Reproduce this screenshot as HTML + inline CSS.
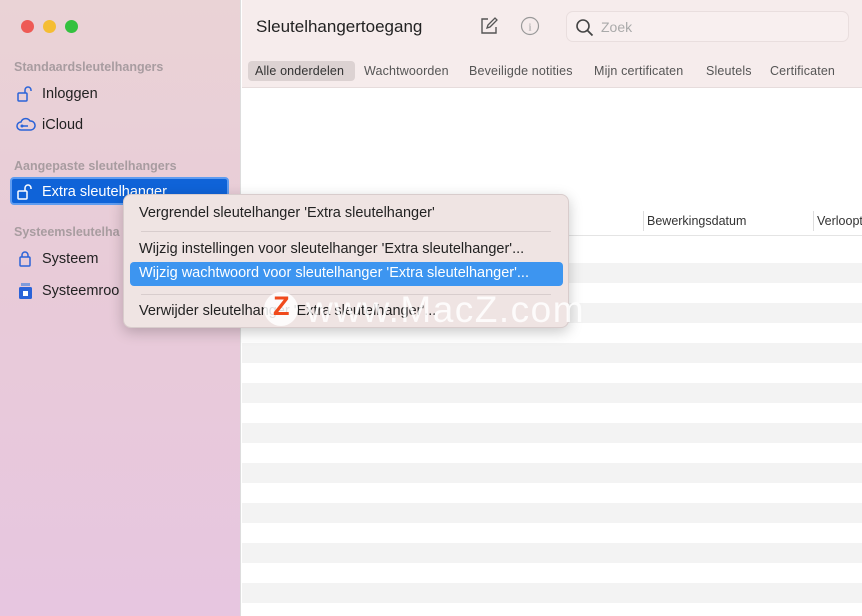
<!DOCTYPE html>
<html><head><meta charset="utf-8"><style>
*{margin:0;padding:0;box-sizing:border-box}
body{width:862px;height:616px;overflow:hidden;position:relative;font-family:"Liberation Sans",sans-serif;background:#fff}
.sb{position:absolute;left:0;top:0;width:241px;height:616px;background:linear-gradient(180deg,#ead3d6 0%,#e8cbd8 45%,#e7c6e0 100%);border-right:1px solid #ddd}
.dot{position:absolute;top:20px;width:13px;height:13px;border-radius:50%}
.sec{position:absolute;left:14px;font-size:12.5px;font-weight:bold;color:#a89ca0}
.it{position:absolute;left:42px;font-size:14.5px;color:#222}
.ic{position:absolute;left:16px}
.hdr{position:absolute;left:242px;top:0;width:620px;height:88px;background:#f6ecec;border-bottom:1px solid #e6dcdc}
.title{position:absolute;left:256px;top:17px;font-size:17px;color:#222}
.search{position:absolute;left:566px;top:11px;width:283px;height:31px;border:1px solid #e9dede;border-radius:7px;background:#f8efef}
.tab{position:absolute;top:64px;font-size:12.5px;color:#555;letter-spacing:.15px}
.stripe{position:absolute;left:242px;width:620px;height:20px;background:#f3f3f3}
.menu{position:absolute;left:123px;top:194px;width:446px;height:134px;background:#efe4e3;border-radius:8px;box-shadow:0 4px 14px rgba(0,0,0,.22);border:1px solid #d8cccc}
.mi{position:absolute;left:15px;font-size:14.5px;color:#222}
.sep{position:absolute;left:17px;right:17px;height:1px;background:#d8cdcd}
</style></head><body>
<div class="sb">
 <div class="dot" style="left:21px;background:#ee5a55"></div>
 <div class="dot" style="left:43px;background:#f5bd33"></div>
 <div class="dot" style="left:65px;background:#34c13f"></div>
 <div class="sec" style="top:60px">Standaardsleutelhangers</div>
 <svg class="ic" style="top:85px" width="20" height="18" viewBox="0 0 20 18"><rect x="2" y="8" width="9" height="8" rx="1" fill="none" stroke="#2a63d8" stroke-width="1.5"/><path d="M9 8V5a3 3 0 0 1 6 0v1" fill="none" stroke="#2a63d8" stroke-width="1.5"/></svg>
 <div class="it" style="top:86px">Inloggen</div>
 <svg class="ic" style="top:117px" width="20" height="16" viewBox="0 0 20 16"><path d="M5 13a4 4 0 0 1 0-8 5 5 0 0 1 9-1 4.5 4.5 0 0 1 1 9z" fill="none" stroke="#2a63d8" stroke-width="1.5"/><path d="M6 9h6" stroke="#2a63d8" stroke-width="1.5"/><circle cx="6" cy="9" r="1.5" fill="#2a63d8"/></svg>
 <div class="it" style="top:117px">iCloud</div>
 <div class="sec" style="top:159px">Aangepaste sleutelhangers</div>
 <div style="position:absolute;left:10px;top:177px;width:219px;height:28px;background:#0f63d8;border-radius:4px;border:2px solid #5f9cf0"></div>
 <svg class="ic" style="top:183px" width="20" height="18" viewBox="0 0 20 18"><rect x="2" y="8" width="9" height="8" rx="1" fill="none" stroke="#fff" stroke-width="1.5"/><path d="M9 8V5a3 3 0 0 1 6 0v1" fill="none" stroke="#fff" stroke-width="1.5"/></svg>
 <div class="it" style="top:184px;color:#fff">Extra sleutelhanger</div>
 <div class="sec" style="top:225px">Systeemsleutelha</div>
 <svg class="ic" style="top:250px" width="20" height="18" viewBox="0 0 20 18"><rect x="4" y="7" width="10" height="9" rx="1" fill="none" stroke="#2a63d8" stroke-width="1.5"/><path d="M6 7V5a3 3 0 0 1 6 0v2" fill="none" stroke="#2a63d8" stroke-width="1.5"/></svg>
 <div class="it" style="top:251px">Systeem</div>
 <svg class="ic" style="top:281px" width="20" height="20" viewBox="0 0 20 20"><rect x="3" y="6" width="13" height="12" rx="1.5" fill="#2a63d8"/><rect x="5" y="2" width="9" height="3" fill="#7e9bdc"/><rect x="7" y="10" width="5" height="5" fill="#fff"/></svg>
 <div class="it" style="top:283px">Systeemroo</div>
</div>
<div class="hdr"></div>
<div class="title">Sleutelhangertoegang</div>
<svg style="position:absolute;left:479px;top:16px" width="20" height="20" viewBox="0 0 20 20"><path d="M9 3H3v14h14v-6" fill="none" stroke="#555" stroke-width="1.4"/><path d="M8 12l1-3 7-7 2 2-7 7z" fill="none" stroke="#555" stroke-width="1.3"/></svg>
<svg style="position:absolute;left:520px;top:16px" width="20" height="20" viewBox="0 0 20 20"><circle cx="10" cy="10" r="8.5" fill="none" stroke="#999" stroke-width="1.2"/><text x="10" y="14.5" font-size="11" text-anchor="middle" fill="#999" font-family="Liberation Serif">i</text></svg>
<div class="search"><svg style="position:absolute;left:8px;top:6px" width="20" height="20" viewBox="0 0 20 20"><circle cx="8" cy="8" r="6" fill="none" stroke="#444" stroke-width="1.6"/><path d="M12.5 12.5l5 5" stroke="#444" stroke-width="1.8"/></svg><span style="position:absolute;left:34px;top:7px;font-size:14px;color:#aaa">Zoek</span></div>
<div style="position:absolute;left:248px;top:61px;width:107px;height:20px;background:#dcd2d2;border-radius:4px"></div>
<div class="tab" style="left:255px;color:#333">Alle onderdelen</div>
<div class="tab" style="left:364px">Wachtwoorden</div>
<div class="tab" style="left:469px">Beveiligde notities</div>
<div class="tab" style="left:594px">Mijn certificaten</div>
<div class="tab" style="left:706px">Sleutels</div>
<div class="tab" style="left:770px">Certificaten</div>
<div style="position:absolute;left:242px;top:235px;width:620px;height:1px;background:#e4e4e4"></div>
<div style="position:absolute;left:643px;top:211px;width:1px;height:20px;background:#ddd"></div>
<div style="position:absolute;left:813px;top:211px;width:1px;height:20px;background:#ddd"></div>
<div style="position:absolute;left:647px;top:214px;font-size:12.5px;color:#333">Bewerkingsdatum</div>
<div style="position:absolute;left:817px;top:214px;font-size:12.5px;color:#333">Verloopt</div>
<div class="stripe" style="top:263px"></div><div class="stripe" style="top:303px"></div><div class="stripe" style="top:343px"></div><div class="stripe" style="top:383px"></div><div class="stripe" style="top:423px"></div><div class="stripe" style="top:463px"></div><div class="stripe" style="top:503px"></div><div class="stripe" style="top:543px"></div><div class="stripe" style="top:583px"></div>
<div class="menu">
 <div class="mi" style="top:10px">Vergrendel sleutelhanger 'Extra sleutelhanger'</div>
 <div class="sep" style="top:36px"></div>
 <div class="mi" style="top:46px">Wijzig instellingen voor sleutelhanger 'Extra sleutelhanger'...</div>
 <div style="position:absolute;left:6px;top:67px;width:433px;height:24px;background:#3d95f0;border-radius:4px"></div>
 <div class="mi" style="top:70px;color:#fff">Wijzig wachtwoord voor sleutelhanger 'Extra sleutelhanger'...</div>
 <div class="sep" style="top:99px"></div>
 <div class="mi" style="top:108px">Verwijder sleutelhanger 'Extra sleutelhanger'...</div>
</div>
<div style="position:absolute;left:264px;top:292px;width:34px;height:34px;border-radius:50%;background:rgba(255,255,255,.85)"></div>
<div style="position:absolute;left:273px;top:291px;font-size:27px;font-weight:bold;color:#f04a1c">Z</div>
<div style="position:absolute;left:306px;top:289px;font-size:37px;color:rgba(255,255,255,.85);letter-spacing:1.5px">www.MacZ.com</div>
</body></html>
